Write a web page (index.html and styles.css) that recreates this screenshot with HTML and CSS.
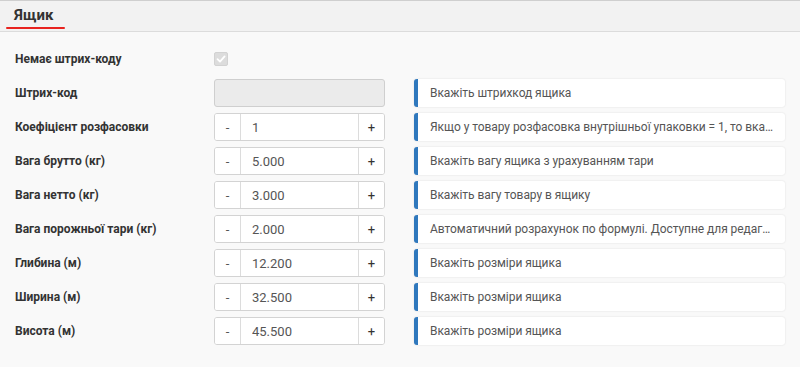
FILE: index.html
```html
<!DOCTYPE html>
<html lang="uk">
<head>
  <meta charset="UTF-8">
  <title>Ящик</title>
  <link rel="stylesheet" href="styles.css">
</head>
<body>
  <div class="panel">
    <div class="panel-header">
      <div class="tab active">Ящик</div>
    </div>

    <div class="form-grid">
      <label class="field-label">Немає штрих-коду</label>
      <div class="field-control">
        <span class="checkbox checked disabled">
          <svg viewBox="0 0 14 14" width="14" height="14"><path d="M3.5 7.2 L6 9.6 L10.6 4.4" fill="none" stroke="#fff" stroke-width="1.8" stroke-linecap="round" stroke-linejoin="round"/></svg>
        </span>
      </div>
      <div></div>

      <label class="field-label">Штрих-код</label>
      <div class="field-control"><input class="text-input" type="text" disabled></div>
      <div class="hint">Вкажіть штрихкод ящика</div>

      <label class="field-label">Коефіцієнт розфасовки</label>
      <div class="field-control">
        <div class="stepper"><button>-</button><input type="text" value="1"><button>+</button></div>
      </div>
      <div class="hint">Якщо у товару розфасовка внутрішньої упаковки = 1, то вказуйте кількість товару в ящику</div>

      <label class="field-label">Вага брутто (кг)</label>
      <div class="field-control">
        <div class="stepper"><button>-</button><input type="text" value="5.000"><button>+</button></div>
      </div>
      <div class="hint">Вкажіть вагу ящика з урахуванням тари</div>

      <label class="field-label">Вага нетто (кг)</label>
      <div class="field-control">
        <div class="stepper"><button>-</button><input type="text" value="3.000"><button>+</button></div>
      </div>
      <div class="hint">Вкажіть вагу товару в ящику</div>

      <label class="field-label">Вага порожньої тари (кг)</label>
      <div class="field-control">
        <div class="stepper"><button>-</button><input type="text" value="2.000"><button>+</button></div>
      </div>
      <div class="hint">Автоматичний розрахунок по формулі. Доступне для редагування</div>

      <label class="field-label">Глибина (м)</label>
      <div class="field-control">
        <div class="stepper"><button>-</button><input type="text" value="12.200"><button>+</button></div>
      </div>
      <div class="hint">Вкажіть розміри ящика</div>

      <label class="field-label">Ширина (м)</label>
      <div class="field-control">
        <div class="stepper"><button>-</button><input type="text" value="32.500"><button>+</button></div>
      </div>
      <div class="hint">Вкажіть розміри ящика</div>

      <label class="field-label">Висота (м)</label>
      <div class="field-control">
        <div class="stepper"><button>-</button><input type="text" value="45.500"><button>+</button></div>
      </div>
      <div class="hint">Вкажіть розміри ящика</div>
    </div>
  </div>
</body>
</html>
```

FILE: styles.css
```css
body {
  margin: 0;
  font-family: Roboto, "Liberation Sans", Arial, sans-serif;
  color: #333;
  background-color: #f9f9f9;
}

.panel {
  border-top: 1px solid #cfcfcf;
  height: 366px;
  box-sizing: border-box;
}

.panel-header {
  background-color: #f2f2f2;
  border-bottom: 1px solid #dcdcdc;
  height: 31px;
  box-sizing: border-box;
  padding-left: 14px;
}

.tab {
  display: inline-block;
  padding: 6px 0 0 0;
  font-size: 15px;
  font-weight: 700;
  line-height: 17px;
  color: #333;
}

.tab.active::after {
  content: "";
  display: block;
  height: 2px;
  margin: 3px -12px 0 -8px;
  border-radius: 2px;
  background-color: #e8231f;
}

.form-grid {
  display: grid;
  grid-template-columns: 170px 171px 1fr;
  grid-auto-rows: 28px;
  column-gap: 29px;
  row-gap: 6px;
  padding: 13px 15px 0 15px;
  align-items: center;
}

.field-label {
  font-size: 12px;
  font-weight: 700;
  color: #333;
  white-space: nowrap;
}

.field-control {
  height: 28px;
  display: flex;
  align-items: center;
}

.checkbox {
  display: inline-flex;
  width: 14px;
  height: 14px;
  border-radius: 2px;
  background-color: #dcdcdc;
  border: 1px solid #d2d2d2;
  box-sizing: border-box;
  align-items: center;
  justify-content: center;
}

.checkbox svg {
  flex: none;
}

.text-input {
  width: 100%;
  height: 28px;
  box-sizing: border-box;
  border: 1px solid #cfcfcf;
  border-radius: 3px;
  background-color: #ebebeb;
  margin: 0;
}

.stepper {
  display: flex;
  width: 100%;
  height: 28px;
  box-sizing: border-box;
  border: 1px solid #d3d3d3;
  border-radius: 3px;
  background-color: #fff;
  overflow: hidden;
}

.stepper button {
  width: 25px;
  flex: none;
  border: none;
  background-color: #fff;
  color: #555;
  font-family: Roboto, "Liberation Sans", Arial, sans-serif;
  font-size: 13px;
  padding: 0;
}

.stepper button:last-child {
  width: 26px;
  border-left: 1px solid #dcdcdc;
  color: #333;
}

.stepper input {
  flex: 1;
  min-width: 0;
  border: none;
  border-left: 1px solid #dcdcdc;
  padding: 0 0 0 11px;
  font-family: Roboto, "Liberation Sans", Arial, sans-serif;
  font-size: 13px;
  color: #555;
  outline: none;
}

.hint {
  height: 28px;
  box-sizing: border-box;
  background-color: #fff;
  border-left: 4px solid #2f78bd;
  border-radius: 3px;
  box-shadow: 0 0 2px rgba(0, 0, 0, 0.12);
  padding: 0 12px;
  font-size: 12px;
  letter-spacing: -0.05px;
  line-height: 28px;
  color: #555;
  white-space: nowrap;
  overflow: hidden;
  text-overflow: ellipsis;
}
```
